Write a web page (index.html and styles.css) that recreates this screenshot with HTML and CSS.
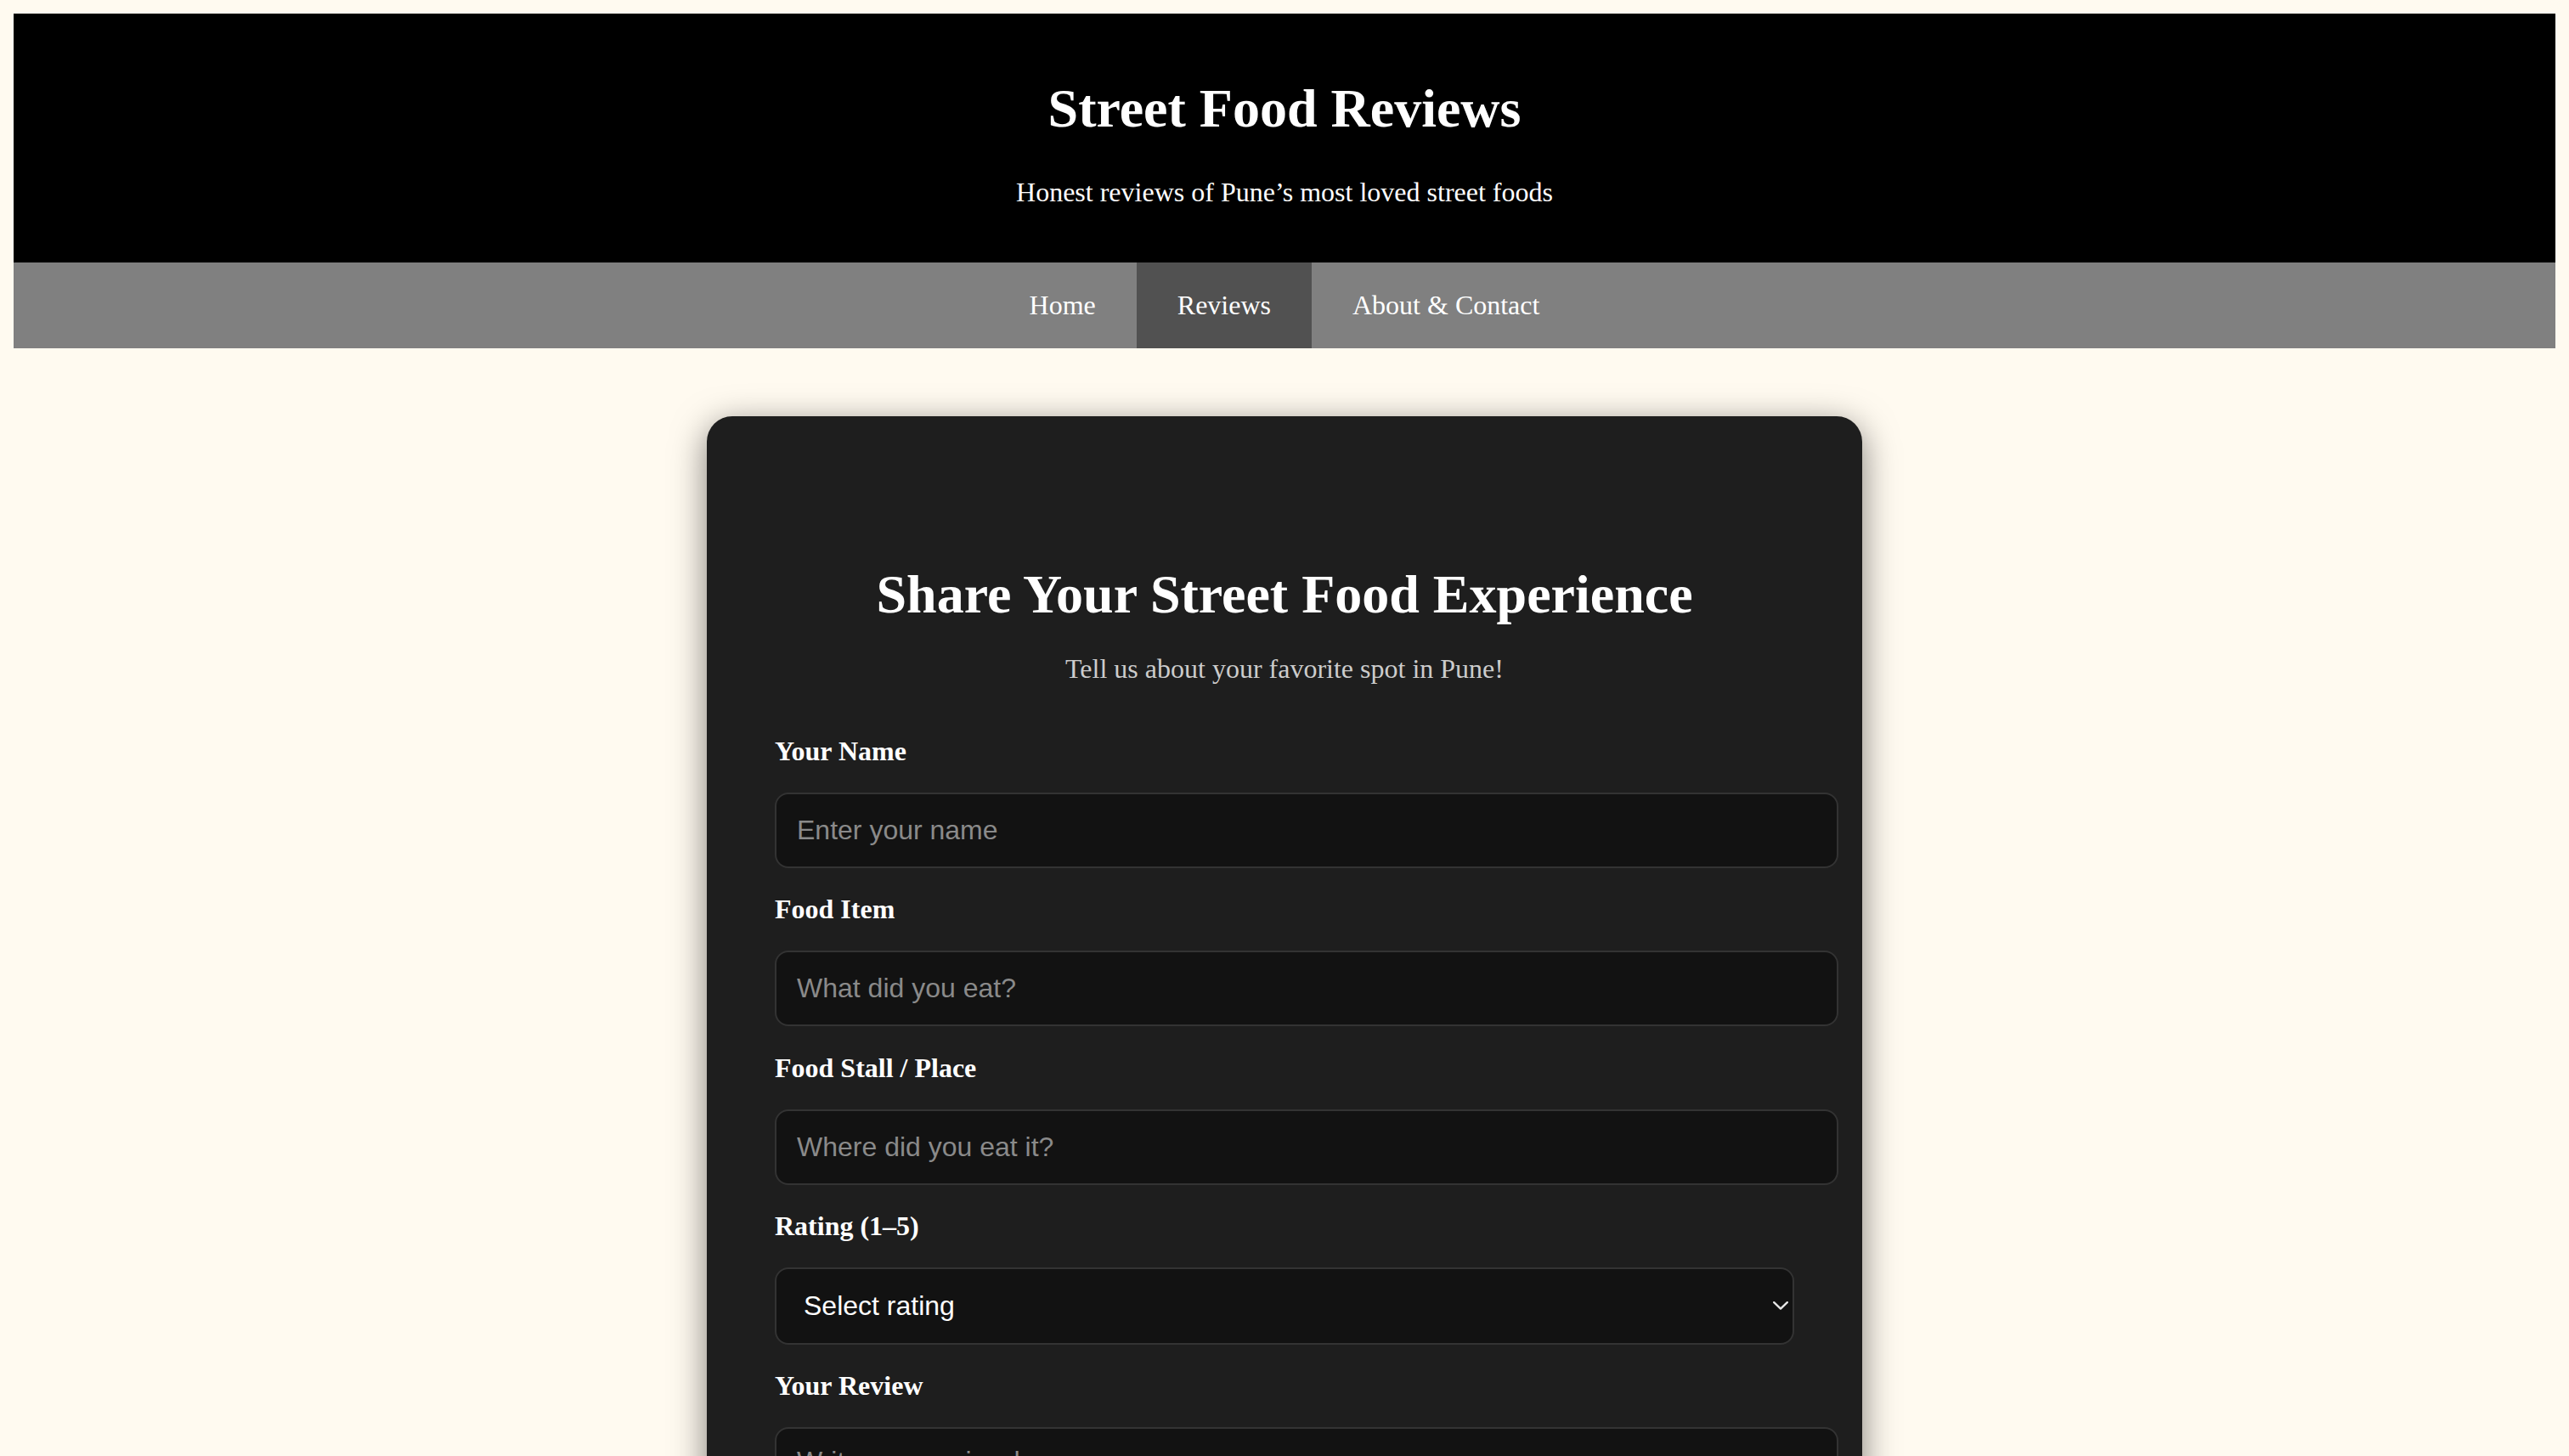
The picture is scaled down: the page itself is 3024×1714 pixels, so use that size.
FILE: index.html
```html
<!DOCTYPE html>
<html lang="en">
<head>
<meta charset="utf-8">
<title>Street Food Reviews</title>
<link rel="stylesheet" href="styles.css">
</head>
<body>
<header class="site-header">
  <h1 class="site-title">Street Food Reviews</h1>
  <p class="site-tagline">Honest reviews of Pune’s most loved street foods</p>
</header>
<nav class="site-nav">
  <a class="nav-link" href="#">Home</a>
  <a class="nav-link active" href="#">Reviews</a>
  <a class="nav-link" href="#">About &amp; Contact</a>
</nav>
<main class="page">
  <section class="card">
    <h2 class="card-title">Share Your Street Food Experience</h2>
    <p class="card-sub">Tell us about your favorite spot in Pune!</p>
    <form class="review-form">
      <label class="field-label" for="name">Your Name</label>
      <input class="field-input" id="name" type="text" placeholder="Enter your name">
      <label class="field-label" for="food">Food Item</label>
      <input class="field-input" id="food" type="text" placeholder="What did you eat?">
      <label class="field-label" for="place">Food Stall / Place</label>
      <input class="field-input" id="place" type="text" placeholder="Where did you eat it?">
      <label class="field-label" for="rating">Rating (1–5)</label>
      <div class="select-wrap">
        <select class="field-select" id="rating">
          <option>Select rating</option>
          <option>1</option>
          <option>2</option>
          <option>3</option>
          <option>4</option>
          <option>5</option>
        </select>
        <svg class="chevron" width="18" height="10" viewBox="0 0 18 10" aria-hidden="true">
          <polyline points="1.2,1.2 9,8.6 16.8,1.2" fill="none" stroke="#e6e6e6" stroke-width="2.4" stroke-linecap="round" stroke-linejoin="round"/>
        </svg>
      </div>
      <label class="field-label" for="review">Your Review</label>
      <textarea class="field-textarea" id="review" placeholder="Write your review here..."></textarea>
    </form>
  </section>
</main>
</body>
</html>
```
FILE: styles.css
```css
html, body {
  background: #fffaf0;
}

body {
  margin: 16px;
  font-family: "Liberation Serif", "Times New Roman", serif;
  color: #000;
}

.site-header {
  background: #000;
  color: #fff;
  text-align: center;
  padding: 32px;
}

.site-title {
  font-size: 64px;
  font-weight: bold;
  margin: 43px 0;
}

.site-tagline {
  font-size: 32px;
  margin: 32px 0;
}

.site-nav {
  background: #808080;
  display: flex;
  justify-content: center;
}

.nav-link {
  display: block;
  color: #fff;
  text-decoration: none;
  font-size: 32px;
  padding: 32px 48px;
}

.nav-link.active {
  background: #515151;
}

.page {
  display: block;
}

.card {
  width: 1200px;
  margin: 80px auto 0;
  padding: 80px;
  background: #1e1e1e;
  border-radius: 30px;
  box-shadow: 0 10px 40px rgba(0, 0, 0, 0.5);
  color: #fff;
}

.card-title {
  font-size: 64px;
  font-weight: bold;
  text-align: center;
  margin: 93px 0 32px;
}

.card-sub {
  font-size: 32px;
  color: #cccccc;
  text-align: center;
  margin: 0 0 60px;
}

.review-form {
  display: block;
}

.field-label {
  display: block;
  font-size: 32px;
  font-weight: bold;
  color: #fff;
  margin: 0 0 30px;
}

.field-input,
.field-textarea {
  display: block;
  width: 100%;
  box-sizing: content-box;
  padding: 24px;
  border: 2px solid #333;
  border-radius: 16px;
  background: #121212;
  color: #fff;
  font-family: "Liberation Sans", Arial, sans-serif;
  font-size: 32px;
  line-height: normal;
  margin: 0 0 30.3px;
  outline: none;
}

.field-input::placeholder,
.field-textarea::placeholder {
  color: #8a8a8a;
}

.field-textarea {
  height: 240px;
  padding-top: 20px;
  resize: vertical;
}

.select-wrap {
  position: relative;
  width: 100%;
  margin: 0 0 30.5px;
}

.field-select {
  display: block;
  width: 100%;
  height: 91px;
  box-sizing: border-box;
  padding: 0 40px 0 32px;
  border: 2px solid #333;
  border-radius: 16px;
  background: #121212;
  color: #fff;
  font-family: "Liberation Sans", Arial, sans-serif;
  font-size: 32px;
  appearance: none;
  -webkit-appearance: none;
  outline: none;
}

.chevron {
  position: absolute;
  right: 7px;
  top: 50%;
  margin-top: -5px;
  pointer-events: none;
}
```
